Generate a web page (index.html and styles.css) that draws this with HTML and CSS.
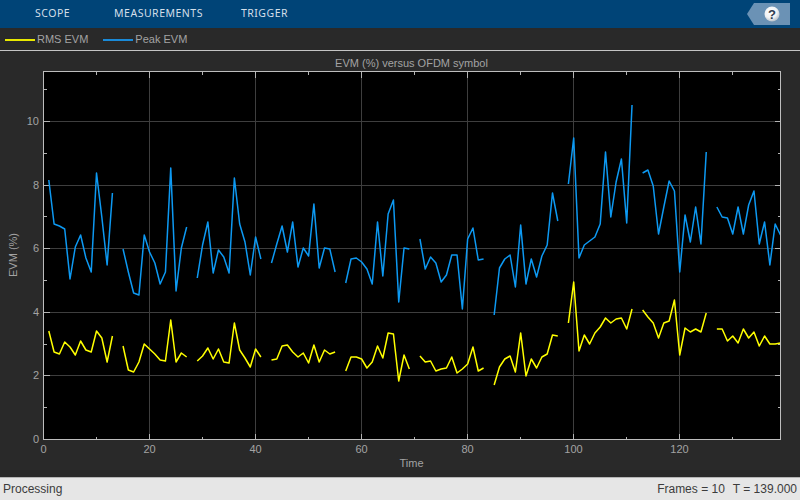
FILE: index.html
```
<!DOCTYPE html>
<html lang="en">
<head>
<meta charset="utf-8">
<title>EVM scope</title>
<link rel="stylesheet" href="styles.css">
</head>
<body>
<div class="app">
  <header class="toolbar">
    <nav class="tabs">
      <span class="tab tab-scope">SCOPE</span>
      <span class="tab tab-meas">MEASUREMENTS</span>
      <span class="tab">TRIGGER</span>
    </nav>
    <svg class="help" width="43" height="22" viewBox="0 0 43 22" aria-label="Help">
      <defs>
        <radialGradient id="ball" cx="0.42" cy="0.35" r="0.7">
          <stop offset="0" stop-color="#ffffff"/>
          <stop offset="0.6" stop-color="#f0f2f4"/>
          <stop offset="1" stop-color="#aeb8c2"/>
        </radialGradient>
      </defs>
      <polygon points="0,11 7,0 43,0 43,22 7,22" fill="#6b92b5"/>
      <circle cx="25" cy="11" r="7.5" fill="url(#ball)"/>
      <text class="help-mark" x="25" y="15.5">?</text>
    </svg>
  </header>
  <div class="legend">
    <span class="legend-item"><i class="swatch swatch-rms"></i>RMS EVM</span>
    <span class="legend-item"><i class="swatch swatch-peak"></i>Peak EVM</span>
  </div>
  <svg class="chart" viewBox="0 51 800 426">
    <rect class="plot-bg" x="43.5" y="71.5" width="737" height="368"/>
    <path class="grid" d="M149.5 71.5V439.5M255.5 71.5V439.5M361.5 71.5V439.5M467.5 71.5V439.5M573.5 71.5V439.5M679.5 71.5V439.5M43.5 121.5H780.5M43.5 185.5H780.5M43.5 248.5H780.5M43.5 312.5H780.5M43.5 375.5H780.5"/>
    <path class="tick" d="M149.5 71.5v6M255.5 71.5v6M361.5 71.5v6M467.5 71.5v6M573.5 71.5v6M679.5 71.5v6M149.5 439.5v-6M255.5 439.5v-6M361.5 439.5v-6M467.5 439.5v-6M573.5 439.5v-6M679.5 439.5v-6M96.5 71.5v3M202.5 71.5v3M308.5 71.5v3M414.5 71.5v3M520.5 71.5v3M626.5 71.5v3M732.5 71.5v3M96.5 439.5v-3M202.5 439.5v-3M308.5 439.5v-3M414.5 439.5v-3M520.5 439.5v-3M626.5 439.5v-3M732.5 439.5v-3M43.5 121.5h6M43.5 185.5h6M43.5 248.5h6M43.5 312.5h6M43.5 375.5h6M780.5 121.5h-6M780.5 185.5h-6M780.5 248.5h-6M780.5 312.5h-6M780.5 375.5h-6M43.5 89.5h3M43.5 153.5h3M43.5 216.5h3M43.5 280.5h3M43.5 344.5h3M43.5 407.5h3M780.5 89.5h-3M780.5 153.5h-3M780.5 216.5h-3M780.5 280.5h-3M780.5 344.5h-3M780.5 407.5h-3"/>
    <g transform="translate(43.5 0) scale(5.302 1)">
      <g class="trace trace-peak">
        <polyline points="1,180 2,224 3,226 4,229 5,279 6,247 7,235 8,258 9,272 10,173 11,217 12,265 13,193"/>
        <polyline points="15,249 16,272 17,293 18,295 19,235 20,252 21,263 22,284 23,272 24,168 25,291 26,248 27,227"/>
        <polyline points="29,278 30,245 31,222 32,273 33,250 34,257 35,273 36,178 37,224 38,242 39,275 40,237 41,259"/>
        <polyline points="43,263 44,244 45,226 46,252 47,222 48,267 49,248 50,256 51,204 52,268 53,248 54,249 55,272"/>
        <polyline points="57,283 58,259 59,258 60,262 61,269 62,284 63,222 64,276 65,214 66,200 67,302 68,248 69,249"/>
        <polyline points="71,239 72,269 73,257 74,263 75,282 76,275 77,255 78,255 79,309 80,239 81,228 82,260 83,259"/>
        <polyline points="85,315 86,268 87,259 88,255 89,287 90,225 91,284 92,259 93,277 94,256 95,245 96,193 97,221"/>
        <polyline points="99,184 100,138 101,258 102,245 103,241 104,237 105,224 106,152 107,217 108,182 109,159 110,223 111,105"/>
        <polyline points="113,173 114,170 115,186 116,234 117,207 118,181 119,191 120,272 121,215 122,242 123,207 124,244 125,152"/>
        <polyline points="127,207 128,217 129,218 130,234 131,207 132,234 133,205 134,191 135,244 136,222 137,265 138,224 139,235"/>
      </g>
      <g class="trace trace-rms">
        <polyline points="1,331 2,352 3,354 4,342 5,347 6,355 7,341 8,350 9,352 10,331 11,338 12,362 13,336"/>
        <polyline points="15,346 16,370 17,372 18,362 19,344 20,349 21,354 22,360 23,361 24,320 25,362 26,353 27,357"/>
        <polyline points="29,361 30,356 31,348 32,359 33,349 34,362 35,363 36,323 37,350 38,358 39,367 40,349 41,357"/>
        <polyline points="43,360 44,359 45,346 46,345 47,352 48,357 49,353 50,363 51,345 52,362 53,350 54,354 55,352"/>
        <polyline points="57,371 58,357 59,357 60,359 61,368 62,362 63,346 64,358 65,333 66,334 67,381 68,355 69,369"/>
        <polyline points="71,356 72,362 73,361 74,371 75,369 76,368 77,357 78,373 79,369 80,364 81,347 82,371 83,368"/>
        <polyline points="85,385 86,367 87,359 88,356 89,372 90,333 91,376 92,359 93,368 94,357 95,354 96,335 97,336"/>
        <polyline points="99,323 100,282 101,351 102,335 103,344 104,333 105,327 106,318 107,323 108,319 109,318 110,329 111,309"/>
        <polyline points="113,310 114,317 115,323 116,338 117,323 118,321 119,300 120,355 121,328 122,332 123,329 124,332 125,313"/>
        <polyline points="127,329 128,329 129,341 130,336 131,343 132,329 133,338 134,332 135,346 136,336 137,344 138,344 139,343"/>
      </g>
    </g>
    <rect class="spine" x="43.5" y="71.5" width="737" height="368"/>
    <text class="label mid" x="411.5" y="67">EVM (%) versus OFDM symbol</text>
    <text class="label mid" x="411.5" y="467">Time</text>
    <text class="label mid" transform="translate(17 255) rotate(-90)">EVM (%)</text>
    <g class="label end">
      <text x="39" y="125">10</text>
      <text x="39" y="189">8</text>
      <text x="39" y="252">6</text>
      <text x="39" y="316">4</text>
      <text x="39" y="379">2</text>
      <text x="39" y="443">0</text>
    </g>
    <g class="label mid">
      <text x="43.5" y="453">0</text>
      <text x="149.5" y="453">20</text>
      <text x="255.5" y="453">40</text>
      <text x="361.5" y="453">60</text>
      <text x="467.5" y="453">80</text>
      <text x="573.5" y="453">100</text>
      <text x="679.5" y="453">120</text>
    </g>
  </svg>
  <footer class="status">
    <span>Processing</span>
    <span class="status-right"><span>Frames = 10</span><span>T = 139.000</span></span>
  </footer>
</div>
</body>
</html>
```

FILE: styles.css
```
* {
  box-sizing: border-box;
}

html,
body {
  margin: 0;
  height: 100%;
  overflow: hidden;
}

.app {
  display: flex;
  flex-direction: column;
  width: 800px;
  height: 500px;
  background: #292929;
  font-family: "Liberation Sans", Arial, sans-serif;
}

.toolbar {
  display: flex;
  flex: none;
  align-items: center;
  justify-content: space-between;
  height: 28px;
  padding-right: 10px;
  background: #004477;
}

.tabs {
  display: flex;
  padding-left: 35px;
  padding-bottom: 2px;
}

.tab {
  font-family: "Noto Sans", sans-serif;
  font-size: 10.5px;
  line-height: 14px;
  letter-spacing: 0.5px;
  color: #d3dfe9;
}

.tab-scope {
  margin-right: 44px;
}

.tab-meas {
  margin-right: 38px;
}

.help {
  display: block;
}

.help-mark {
  font-family: "Liberation Sans", sans-serif;
  font-size: 13px;
  font-weight: 700;
  text-anchor: middle;
  fill: #2f3d50;
}

.legend {
  display: flex;
  flex: none;
  align-items: center;
  gap: 15px;
  height: 23px;
  padding-left: 5px;
  border-bottom: 1px solid #c4c4c4;
  font-size: 11px;
  color: #a3a3a3;
}

.legend-item {
  display: flex;
  align-items: center;
  gap: 2px;
}

.swatch {
  display: block;
  width: 30px;
  height: 2px;
  margin-top: 2px;
}

.swatch-rms {
  background: #e8e800;
}

.swatch-peak {
  background: #1a8ad8;
}

.chart {
  display: block;
  flex: none;
  width: 800px;
  height: 426px;
}

.plot-bg {
  fill: #000000;
}

.grid {
  fill: none;
  stroke: #3e3e3e;
  stroke-width: 1;
  shape-rendering: crispEdges;
}

.tick {
  fill: none;
  stroke: #b4b4b4;
  stroke-width: 1;
  shape-rendering: crispEdges;
}

.spine {
  fill: none;
  stroke: #bdbdbd;
  stroke-width: 1;
  shape-rendering: crispEdges;
}

.trace polyline {
  fill: none;
  stroke-width: 1.5;
  stroke-linejoin: round;
  vector-effect: non-scaling-stroke;
}

.trace-peak polyline {
  stroke: #0d99f2;
}

.trace-rms polyline {
  stroke: #ffff00;
}

.label {
  font-family: "Liberation Sans", Arial, sans-serif;
  font-size: 11px;
  fill: #a3a3a3;
}

.mid {
  text-anchor: middle;
}

.end {
  text-anchor: end;
}

.status {
  display: flex;
  flex: none;
  align-items: center;
  justify-content: space-between;
  height: 23px;
  padding: 0 3px;
  background: #e6e6e6;
  border-top: 1px solid #b4b4b4;
  font-size: 12px;
  color: #3c3c3c;
}

.status-right {
  display: flex;
  gap: 8px;
}
```
